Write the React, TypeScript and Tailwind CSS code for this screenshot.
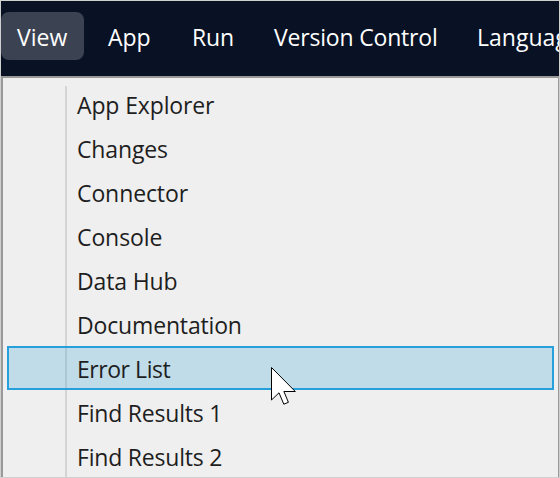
const menus = [
  { label: 'View', box: 'w-[83px] rounded-lg bg-[#3b4251] pl-4', text: 'tracking-normal' },
  { label: 'App', box: 'w-[84px] pl-6', text: 'tracking-normal' },
  { label: 'Run', box: 'w-[82px] pl-6', text: 'tracking-[-0.2px]' },
  { label: 'Version Control', box: 'w-[203px] pl-6', text: 'tracking-[-0.19px]' },
  { label: 'Language', box: 'w-[140px] pl-6', text: 'tracking-normal' },
];

const items = [
  { label: 'App Explorer', text: 'tracking-[-0.13px]' },
  { label: 'Changes', text: 'tracking-[-0.13px]' },
  { label: 'Connector', text: 'tracking-[-0.1px]' },
  { label: 'Console', text: 'tracking-[-0.1px]' },
  { label: 'Data Hub', text: 'tracking-[-0.13px]' },
  { label: 'Documentation', text: 'tracking-[-0.16px]' },
  { label: 'Error List', text: 'tracking-[-0.45px]', selected: true },
  { label: 'Find Results 1', text: 'tracking-[-0.2px]' },
  { label: 'Find Results 2', text: 'tracking-[-0.2px]' },
];

function Cursor() {
  return (
    <svg className="absolute top-[365px] left-[269px]" width="28" height="40" viewBox="0 0 28 40">
      <path
        d="M1.5 1.5V34L9 26.8L13.8 38.2L18.4 36.3L13.9 25.5H25.3Z"
        fill="#fff"
        stroke="#000"
        strokeWidth="1"
        strokeLinejoin="round"
      />
    </svg>
  );
}

export default function App() {
  return (
    <div className="relative flex h-[478px] w-[560px] flex-col overflow-hidden border border-[#d0d0d0] bg-[#efefef] font-['Open_Sans',sans-serif] text-[23px] leading-8 text-[#1e1e1e]">
      <header className="flex h-[75px] shrink-0 items-start overflow-hidden bg-[#091224] pt-[11px] text-white">
        {menus.map((m) => (
          <div key={m.label} className={`flex h-12 shrink-0 items-center pt-0.5 whitespace-nowrap ${m.box}`}>
            <span className={m.text}>{m.label}</span>
          </div>
        ))}
      </header>
      <main className="min-h-0 flex-1 overflow-hidden border-t-2 border-r border-l-2 border-[#999] pt-1">
        <ul className="bg-linear-to-r from-[#d4d4d4] to-[#d4d4d4] bg-[length:2px_100%] bg-[position:62px_4px] bg-no-repeat px-1">
          {items.map((m) => (
            <li
              key={m.label}
              className={`flex h-11 items-center border-2 pt-0.5 pl-[68px] whitespace-nowrap ${m.selected ? 'border-[#26a0da] bg-[#26a0da]/23' : 'border-transparent'}`}
            >
              <span className={m.text}>{m.label}</span>
            </li>
          ))}
        </ul>
      </main>
      <Cursor />
    </div>
  );
}
